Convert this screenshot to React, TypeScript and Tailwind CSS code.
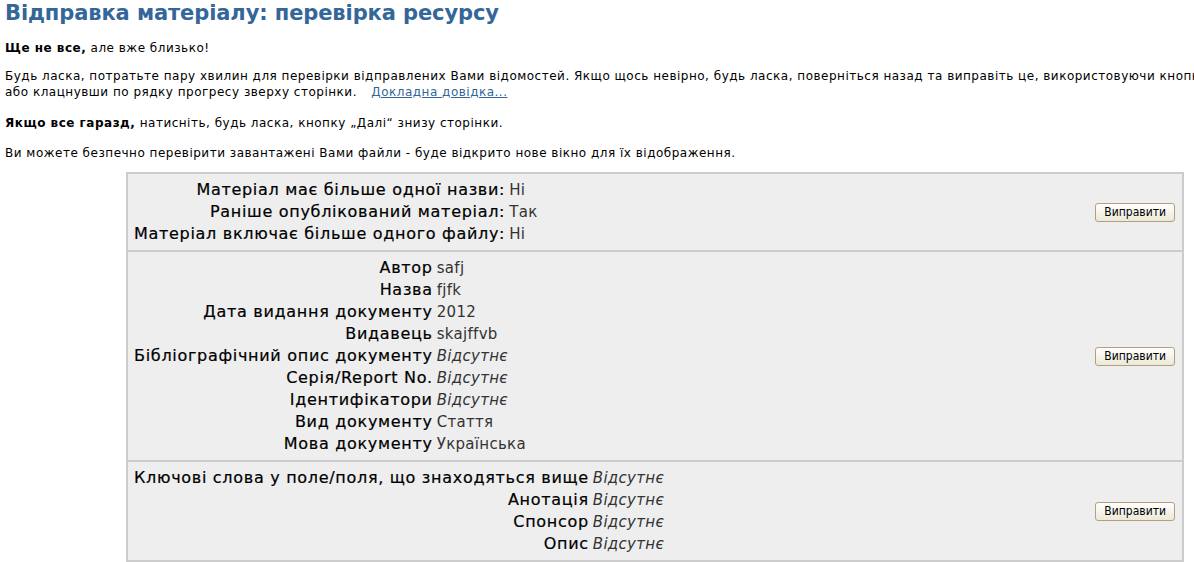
import React from 'react'

type Item = { label: string; value: string; missing?: boolean }

const sections: Item[][] = [
  [
    { label: 'Матеріал має більше одної назви:', value: 'Ні' },
    { label: 'Раніше опублікований матеріал:', value: 'Так' },
    { label: 'Матеріал включає більше одного файлу:', value: 'Ні' },
  ],
  [
    { label: 'Автор', value: 'safj' },
    { label: 'Назва', value: 'fjfk' },
    { label: 'Дата видання документу', value: '2012' },
    { label: 'Видавець', value: 'skajffvb' },
    { label: 'Бібліографічний опис документу', value: 'Відсутнє', missing: true },
    { label: 'Серія/Report No.', value: 'Відсутнє', missing: true },
    { label: 'Ідентифікатори', value: 'Відсутнє', missing: true },
    { label: 'Вид документу', value: 'Стаття' },
    { label: 'Мова документу', value: 'Українська' },
  ],
  [
    { label: 'Ключові слова у поле/поля, що знаходяться вище', value: 'Відсутнє', missing: true },
    { label: 'Анотація', value: 'Відсутнє', missing: true },
    { label: 'Спонсор', value: 'Відсутнє', missing: true },
    { label: 'Опис', value: 'Відсутнє', missing: true },
  ],
]

// секція перевірки: ліворуч пари "поле — значення", праворуч кнопка
function ReviewSection({ items, last }: { items: Item[]; last?: boolean }) {
  return (
    <div className={`flex items-center px-[6px] py-[5px] ${last ? '' : 'border-b-2 border-[#cccccc]'}`}>
      <div className="grid grid-cols-[auto_auto] gap-x-[4px] content-start">
        {items.map((it) => (
          <React.Fragment key={it.label}>
            <div className="text-right text-[16px] leading-[22px] text-black font-['DejaVu_Sans',sans-serif] tracking-[0.7px] [-webkit-text-stroke:0.2px_black]">
              {it.label}
            </div>
            <div
              className={`text-left text-[15px] leading-[22px] text-[#333333] font-['DejaVu_Sans',sans-serif] tracking-[0.3px] ${
                it.missing ? 'italic' : ''
              }`}
            >
              {it.value}
            </div>
          </React.Fragment>
        ))}
      </div>
      <div className="ml-auto mr-[1px]">
        <button className="h-[19px] px-[8px] rounded-[3px] border border-[#b59e7e] bg-gradient-to-b from-white to-[#ece9d8] text-[12px] leading-[15px] text-black font-['DejaVu_Sans_Condensed',sans-serif]">
          Виправити
        </button>
      </div>
    </div>
  )
}

export default function App() {
  return (
    <div className="min-h-[562px] bg-white px-[5px] pt-[1px] text-[12px] leading-[16px] tracking-[0.5px] text-black font-['DejaVu_Sans',sans-serif] overflow-hidden">
      <h1 className="text-[21px] leading-[25px] font-bold tracking-[-0.1px] text-[#336699] whitespace-nowrap">
        Відправка матеріалу: перевірка ресурсу
      </h1>
      <p className="mt-[14px]">
        <b>Ще не все,</b> але вже близько!
      </p>
      <p className="mt-[12px] w-[1300px]">
        Будь ласка, потратьте пару хвилин для перевірки відправлених Вами відомостей. Якщо щось невірно, будь ласка, поверніться назад та виправіть це, використовуючи кнопки
        <br />
        або клацнувши по рядку прогресу зверху сторінки.{' '}
        <a href="#" className="ml-[10px] text-[#336699] underline">
          Докладна довідка...
        </a>
      </p>
      <p className="mt-[15px]">
        <b>Якщо все гаразд,</b> натисніть, будь ласка, кнопку „Далі“ знизу сторінки.
      </p>
      <p className="mt-[14px]">Ви можете безпечно перевірити завантажені Вами файли - буде відкрито нове вікно для їх відображення.</p>
      <div className="mt-[11px] ml-[121px] w-[1058px] border-2 border-[#cccccc] bg-[#eeeeee] tracking-normal">
        {sections.map((s, i) => (
          <ReviewSection key={i} items={s} last={i === sections.length - 1} />
        ))}
      </div>
    </div>
  )
}
